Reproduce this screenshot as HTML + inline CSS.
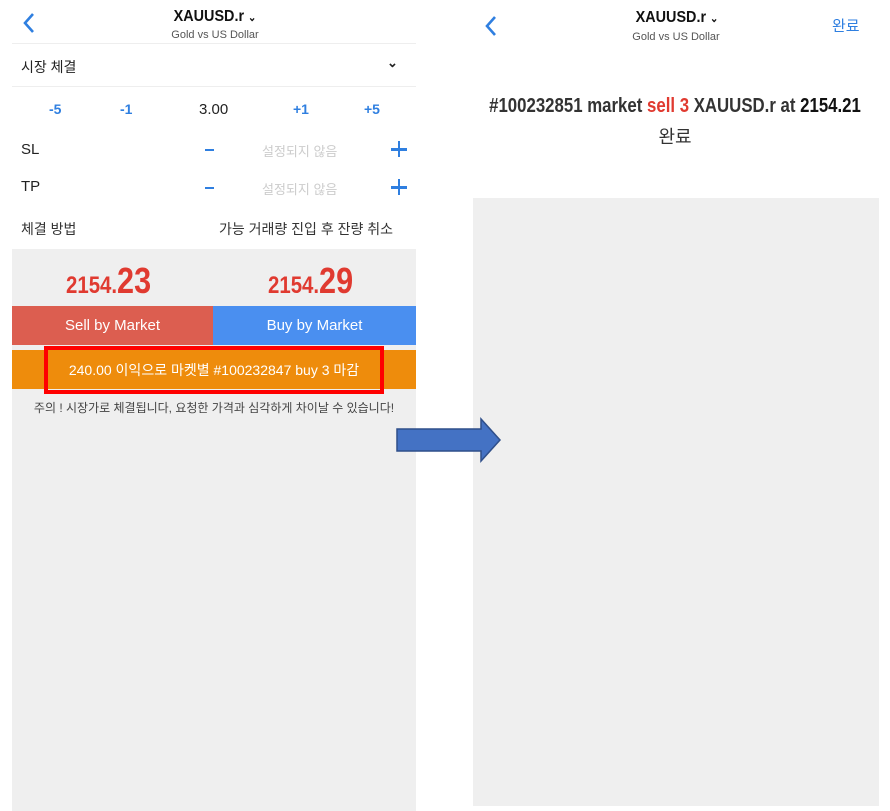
<!DOCTYPE html>
<html><head><meta charset="utf-8"><style>
*{margin:0;padding:0;box-sizing:border-box}
body{width:890px;height:811px;background:#fff;position:relative;overflow:hidden;font-family:"Liberation Sans","Noto Sans CJK KR",sans-serif}
.a{position:absolute}
.blue{color:#2f7fe0}
.c{text-align:center}
.cond{font-family:"Liberation Sans Narrow","Liberation Sans","Noto Sans CJK KR",sans-serif}
.chev{font-size:11px;font-weight:bold}
</style></head><body>
<!-- left panel -->
<svg class="a" style="left:22px;top:12px" width="14" height="22"><path d="M11 2 L3 11 L11 20" stroke="#2f7fe0" stroke-width="2.6" fill="none"/></svg>
<div class="a c cond" style="left:150px;width:130px;top:8px;font-size:16px;font-weight:bold;color:#111;transform:scaleX(.9);white-space:nowrap">XAUUSD.r <span class="chev">⌄</span></div>
<div class="a c" style="left:140px;width:150px;top:29px;font-size:11px;color:#555">Gold vs US Dollar</div>
<div class="a" style="left:12px;width:404px;top:43px;height:1px;background:#eee"></div>
<div class="a" style="left:21px;top:57px;font-size:14px;color:#222">시장 체결</div>
<div class="a" style="left:387px;top:55px;font-size:13px;color:#222;font-weight:bold">⌄</div>
<div class="a" style="left:12px;width:404px;top:86px;height:1px;background:#eee"></div>
<div class="a blue" style="left:49px;top:101px;font-size:14px;font-weight:bold">-5</div>
<div class="a blue" style="left:120px;top:101px;font-size:14px;font-weight:bold">-1</div>
<div class="a" style="left:199px;top:101px;font-size:15px;color:#222">3.00</div>
<div class="a blue" style="left:293px;top:101px;font-size:14px;font-weight:bold">+1</div>
<div class="a blue" style="left:364px;top:101px;font-size:14px;font-weight:bold">+5</div>
<div class="a" style="left:21px;top:141px;font-size:15px;color:#222">SL</div>
<div class="a" style="left:205px;top:149px;width:9px;height:2px;background:#2f7fe0"></div>
<div class="a" style="left:262px;top:141px;font-size:13px;color:#ccc">설정되지 않음</div>
<div class="a" style="left:391px;top:148px;width:16px;height:2.5px;background:#2f7fe0"></div>
<div class="a" style="left:397.7px;top:141px;width:2.5px;height:16px;background:#2f7fe0"></div>
<div class="a" style="left:21px;top:178px;font-size:15px;color:#222">TP</div>
<div class="a" style="left:205px;top:187px;width:9px;height:2px;background:#2f7fe0"></div>
<div class="a" style="left:262px;top:179px;font-size:13px;color:#ccc">설정되지 않음</div>
<div class="a" style="left:391px;top:186px;width:16px;height:2.5px;background:#2f7fe0"></div>
<div class="a" style="left:397.7px;top:179px;width:2.5px;height:16px;background:#2f7fe0"></div>
<div class="a" style="left:21px;top:219px;font-size:14px;color:#333">체결 방법</div>
<div class="a" style="left:219px;top:219px;font-size:14px;color:#333">가능 거래량 진입 후 잔량 취소</div>
<div class="a" style="left:12px;width:404px;top:249px;height:562px;background:#efefef"></div>
<div class="a cond" style="left:66px;top:260px;color:#e03a30;font-weight:bold;transform:scaleX(.85);transform-origin:left;white-space:nowrap"><span style="font-size:24px">2154.</span><span style="font-size:36px">23</span></div>
<div class="a cond" style="left:268px;top:260px;color:#e03a30;font-weight:bold;transform:scaleX(.85);transform-origin:left;white-space:nowrap"><span style="font-size:24px">2154.</span><span style="font-size:36px">29</span></div>
<div class="a c" style="left:12px;width:201px;top:306px;height:39px;background:#dc5e50;color:#fff;font-size:15px;line-height:40px">Sell by Market</div>
<div class="a c" style="left:213px;width:203px;top:306px;height:39px;background:#4a8ff0;color:#fff;font-size:15px;line-height:40px">Buy by Market</div>
<div class="a" style="left:12px;width:404px;top:350px;height:39px;background:#ee8c0c"></div>
<div class="a c" style="left:44px;width:340px;top:346px;height:48px;border:4px solid #f00;color:#fff;font-size:14px;line-height:40px;white-space:nowrap">240.00 이익으로 마켓별 #100232847 buy 3 마감</div>
<div class="a c" style="left:12px;width:404px;top:399px;font-size:12px;color:#444;white-space:nowrap">주의 ! 시장가로 체결됩니다, 요청한 가격과 심각하게 차이날 수 있습니다!</div>
<!-- right panel -->
<svg class="a" style="left:484px;top:15px" width="14" height="22"><path d="M11 2 L3 11 L11 20" stroke="#2f7fe0" stroke-width="2.6" fill="none"/></svg>
<div class="a c cond" style="left:612px;width:130px;top:9px;font-size:16px;font-weight:bold;color:#111;transform:scaleX(.9);white-space:nowrap">XAUUSD.r <span class="chev">⌄</span></div>
<div class="a c" style="left:601px;width:150px;top:31px;font-size:11px;color:#555">Gold vs US Dollar</div>
<div class="a blue" style="left:832px;top:15px;font-size:15px">완료</div>
<div class="a c cond" style="left:425px;width:500px;top:95px;font-size:20px;font-weight:bold;color:#333;transform:scaleX(.84);white-space:nowrap">#100232851 market <span style="color:#e03a30">sell 3</span> XAUUSD.r at <span style="color:#111">2154.21</span></div>
<div class="a c" style="left:470px;width:410px;top:123px;font-size:18px;color:#333">완료</div>
<div class="a" style="left:473px;width:406px;top:198px;height:608px;background:#efefef"></div>
<!-- arrow -->
<svg class="a" style="left:395px;top:416px" width="110" height="48"><path d="M2 13 H86 V3 L105 24 L86 45 V35 H2 Z" fill="#4472c4" stroke="#2f4f8a" stroke-width="1.5"/></svg>
</body></html>
